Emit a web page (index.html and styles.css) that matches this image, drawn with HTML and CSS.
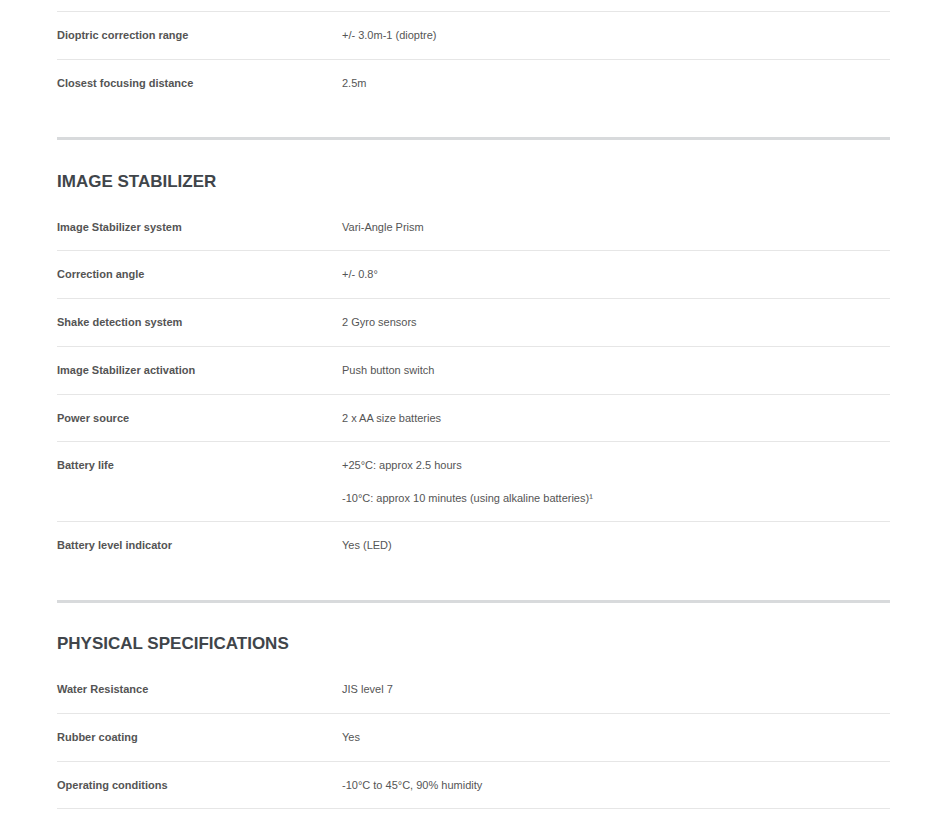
FILE: index.html
```html
<!DOCTYPE html>
<html>
<head>
<meta charset="utf-8">
<link rel="stylesheet" href="styles.css">
</head>
<body>
<div class="page">
  <section class="spec spec-continued">
    <div class="rows">
      <div class="row"><div class="label">Dioptric correction range</div><div class="value"><p>+/- 3.0m-1 (dioptre)</p></div></div>
      <div class="row"><div class="label">Closest focusing distance</div><div class="value"><p>2.5m</p></div></div>
    </div>
  </section>
  <section class="spec">
    <h2 class="spec-title">IMAGE STABILIZER</h2>
    <div class="rows">
      <div class="row"><div class="label">Image Stabilizer system</div><div class="value"><p>Vari-Angle Prism</p></div></div>
      <div class="row"><div class="label">Correction angle</div><div class="value"><p>+/- 0.8°</p></div></div>
      <div class="row"><div class="label">Shake detection system</div><div class="value"><p>2 Gyro sensors</p></div></div>
      <div class="row"><div class="label">Image Stabilizer activation</div><div class="value"><p>Push button switch</p></div></div>
      <div class="row"><div class="label">Power source</div><div class="value"><p>2 x AA size batteries</p></div></div>
      <div class="row"><div class="label">Battery life</div><div class="value"><p>+25°C: approx 2.5 hours</p><p>-10°C: approx 10 minutes (using alkaline batteries)¹</p></div></div>
      <div class="row"><div class="label">Battery level indicator</div><div class="value"><p>Yes (LED)</p></div></div>
    </div>
  </section>
  <section class="spec">
    <h2 class="spec-title">PHYSICAL SPECIFICATIONS</h2>
    <div class="rows">
      <div class="row"><div class="label">Water Resistance</div><div class="value"><p>JIS level 7</p></div></div>
      <div class="row"><div class="label">Rubber coating</div><div class="value"><p>Yes</p></div></div>
      <div class="row"><div class="label">Operating conditions</div><div class="value"><p>-10°C to 45°C, 90% humidity</p></div></div>
      <div class="row row-tail"></div>
    </div>
  </section>
</div>
</body>
</html>
```
FILE: styles.css
```css
html, body {
  margin: 0;
  padding: 0;
  background: #ffffff;
}
body {
  font-family: "Liberation Sans", Arial, sans-serif;
  color: #555555;
}
.page {
  margin: 0 58px 0 57px;
  padding-top: 11px;
}
.spec {
  border-top: 3px solid #d8dadc;
  padding-bottom: 30.5px;
}
.spec-continued {
  border-top: none;
}
.spec-title {
  margin: 0;
  padding: 30.5px 0 11px;
  font-size: 17px;
  line-height: 22px;
  font-weight: bold;
  color: #40454a;
}
.rows {
  display: flex;
  flex-direction: column;
}
.row {
  display: grid;
  grid-template-columns: 285px 1fr;
  padding: 16px 0 15.75px;
  border-top: 1px solid #e6e6e6;
  font-size: 11px;
  line-height: 15px;
}
.row:first-child {
  border-top: none;
}
.spec-continued .row:first-child {
  border-top: 1px solid #e6e6e6;
}
.row-tail {
  padding: 0;
}
.label {
  font-weight: bold;
  color: #545454;
}
.value {
  display: flex;
  flex-direction: column;
  gap: 17.25px;
  color: #555555;
}
.value p {
  margin: 0;
}
```
